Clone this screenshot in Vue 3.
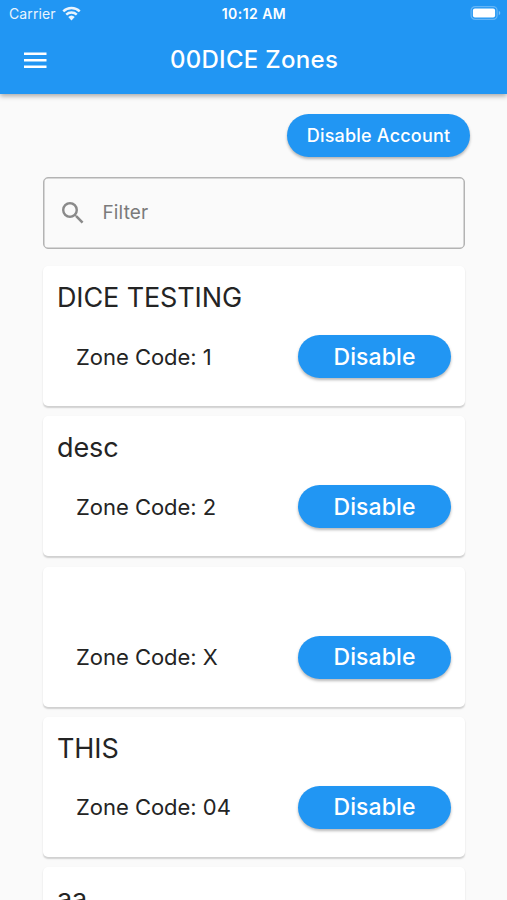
<script setup>
const zones = [
  { name: 'DICE TESTING', code: '1' },
  { name: 'desc', code: '2' },
  { name: '', code: 'X' },
  { name: 'THIS', code: '04' },
  { name: 'aa', code: '' },
]
</script>

<template>
  <div class="screen">
    <header class="app-bar">
      <div class="status">
        <div class="carrier">
          <span>Carrier</span>
          <svg class="wifi" viewBox="0 0 18 14">
            <path d="M1.2 4.9a11.2 11.2 0 0 1 15.6 0M4 8a7.2 7.2 0 0 1 10 0" fill="none" stroke="#fff" stroke-width="2.3" />
            <path d="M5.9 10.4a4.5 4.5 0 0 1 6.2 0L9 13.6z" fill="#fff" />
          </svg>
        </div>
        <div class="time">10:12 AM</div>
        <svg class="battery" viewBox="0 0 31 14">
          <rect x="1.1" y="0.6" width="26" height="12.8" rx="4" fill="none" stroke="#fff" stroke-opacity=".3" stroke-width="1.2" />
          <rect x="2.9" y="2.6" width="22.2" height="8.8" rx="2" fill="#fff" />
          <path d="M28.8 4.8c2 .8 2 3.6 0 4.4z" fill="#fff" fill-opacity=".4" />
        </svg>
      </div>
      <div class="toolbar">
        <svg class="menu" viewBox="0 0 24 17">
          <path d="M0 1.7h22.5M0 8.2h22.5M0 14.7h22.5" stroke="#fff" stroke-width="2.6" />
        </svg>
        <h1>00DICE Zones</h1>
      </div>
    </header>

    <main>
      <button class="pill account">Disable Account</button>
      <div class="filter">
        <svg class="search" viewBox="3 3 17.49 17.49">
          <path fill="#8a8a8a" d="M15.5 14h-.79l-.28-.27A6.471 6.471 0 0 0 16 9.5 6.5 6.5 0 1 0 9.5 16c1.61 0 3.09-.59 4.23-1.57l.27.28v.79l5 4.99L20.49 19l-4.99-5zm-6 0C7.01 14 5 11.99 5 9.5S7.01 5 9.5 5 14 7.01 14 9.5 11.99 14 9.5 14z" />
        </svg>
        <span>Filter</span>
      </div>
      <section v-for="(zone, index) in zones" :key="index" class="card">
        <h2>{{ zone.name }}</h2>
        <div v-if="zone.code" class="row">
          <span class="code">Zone Code: {{ zone.code }}</span>
          <button class="pill toggle">Disable</button>
        </div>
      </section>
    </main>
  </div>
</template>

<style>
body {
  background: #fafafa;
  overflow: hidden;
}
</style>

<style scoped>
.screen {
  width: 507px;
  height: 900px;
  overflow: hidden;
  background: #fafafa;
  color: #242424;
  font-family: Inter, "Liberation Sans", sans-serif;
}
.app-bar {
  position: relative;
  height: 94px;
  background: #2196f3;
  color: #fff;
  box-shadow: 0 2px 5px rgba(0, 0, 0, .34);
}
.status {
  height: 27px;
  display: grid;
  grid-template-columns: 1fr auto 1fr;
  align-items: center;
  padding: 0 6px 0 9px;
  font-size: 14px;
}
.carrier {
  display: flex;
  align-items: center;
  gap: 6px;
  letter-spacing: .1px;
  opacity: .9;
}
.wifi {
  width: 19px;
  height: 15px;
}
.time {
  margin-left: -2px;
  font-size: 14px;
  font-weight: 600;
  letter-spacing: .45px;
}
.battery {
  width: 31px;
  height: 14px;
  justify-self: end;
  margin-top: -1px;
}
.toolbar {
  height: 66px;
  display: grid;
  grid-template-columns: 1fr auto 1fr;
  align-items: center;
  padding: 0 23px 0 24px;
}
.menu {
  width: 24px;
  height: 17px;
}
h1 {
  margin: 0;
  font-size: 24px;
  font-weight: 500;
  line-height: 30px;
  letter-spacing: .3px;
}
main {
  display: flex;
  flex-direction: column;
  padding: 20px 42px 0 43px;
}
.pill {
  flex: none;
  border: 0;
  padding: 0;
  height: 43px;
  border-radius: 22px;
  background: #2196f3;
  color: #fff;
  font-family: inherit;
  font-weight: 500;
  box-shadow: 0 2px 3px rgba(0, 0, 0, .28);
}
.account {
  align-self: flex-end;
  width: 183px;
  margin-right: -5px;
  font-size: 18px;
  letter-spacing: .2px;
}
.filter {
  height: 72px;
  box-sizing: border-box;
  margin: 20px 0 17px;
  border: 1.5px solid #b3b3b3;
  box-shadow: inset 0 0 0 .5px #b3b3b3;
  border-radius: 5px;
  display: flex;
  align-items: center;
  gap: 19px;
  padding-left: 18px;
  color: #7b7b7b;
  font-size: 19px;
  letter-spacing: .15px;
}
.filter span {
  margin-top: -1px;
}
.search {
  width: 21.5px;
  height: 21.5px;
}
.card {
  flex: none;
  height: 140px;
  margin-bottom: 10.3px;
  border-radius: 5px;
  background: #fff;
  box-shadow: 0 1.5px 1.5px rgba(0, 0, 0, .17);
}
h2 {
  margin: 0;
  height: 61px;
  box-sizing: border-box;
  display: flex;
  align-items: center;
  padding: 2px 0 0 14px;
  font-size: 27px;
  font-weight: 400;
  letter-spacing: -.12px;
}
.row {
  display: flex;
  align-items: center;
  justify-content: space-between;
  padding: 8px 14px 0 33px;
}
.code {
  font-size: 22px;
  letter-spacing: -.03px;
}
.toggle {
  width: 153px;
  font-size: 23px;
  letter-spacing: .1px;
}
</style>
